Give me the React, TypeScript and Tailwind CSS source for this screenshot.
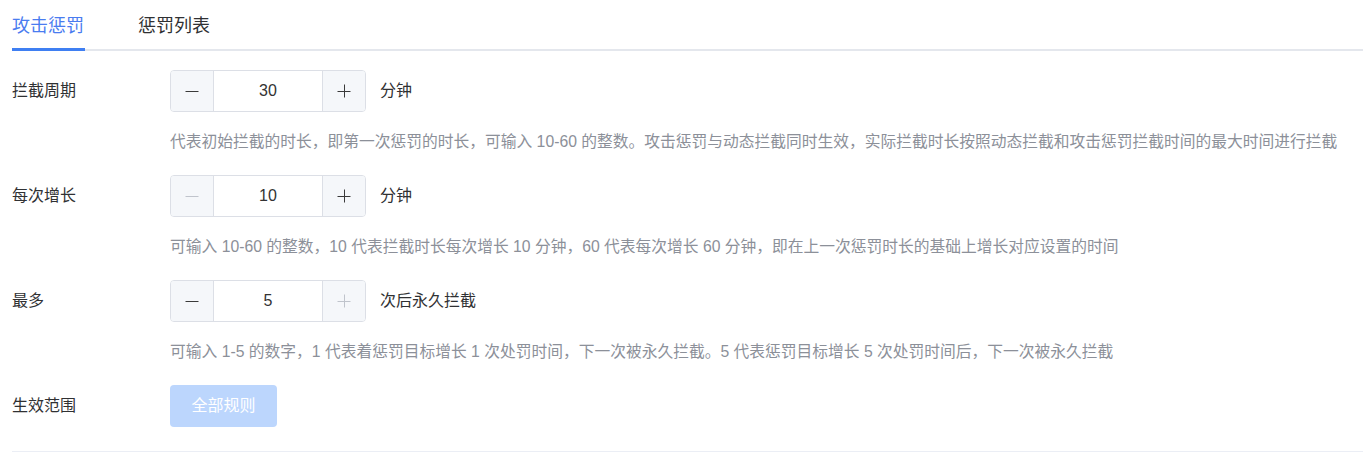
import React from 'react';

interface StepperProps {
  value: number;
  minDisabled?: boolean;
  maxDisabled?: boolean;
}

const Minus = ({ disabled }: { disabled?: boolean }) => (
  <svg width="14" height="14" viewBox="0 0 14 14">
    <line x1="0.5" y1="7.5" x2="13.5" y2="7.5" stroke={disabled ? '#c0c4cc' : '#3a3a3a'} strokeWidth="1" />
  </svg>
);

const Plus = ({ disabled }: { disabled?: boolean }) => (
  <svg width="14" height="14" viewBox="0 0 14 14">
    <line x1="0.5" y1="7.5" x2="13.5" y2="7.5" stroke={disabled ? '#c0c4cc' : '#3a3a3a'} strokeWidth="1" />
    <line x1="7.5" y1="0.5" x2="7.5" y2="13.5" stroke={disabled ? '#c0c4cc' : '#3a3a3a'} strokeWidth="1" />
  </svg>
);

const Stepper: React.FC<StepperProps> = ({ value, minDisabled, maxDisabled }) => (
  <div className="flex h-[42px] w-[196px] overflow-hidden rounded-[4px] border border-[#dcdfe6]">
    <div className="flex w-[43px] items-center justify-center border-r border-[#dcdfe6] bg-[#f5f7fa]">
      <Minus disabled={minDisabled} />
    </div>
    <div className="flex flex-1 items-center justify-center text-[16px] text-[#333]">{value}</div>
    <div className="flex w-[43px] items-center justify-center border-l border-[#dcdfe6] bg-[#f5f7fa]">
      <Plus disabled={maxDisabled} />
    </div>
  </div>
);

const rows = [
  {
    label: '拦截周期',
    value: 30,
    unit: '分钟',
    help: '代表初始拦截的时长，即第一次惩罚的时长，可输入 10-60 的整数。攻击惩罚与动态拦截同时生效，实际拦截时长按照动态拦截和攻击惩罚拦截时间的最大时间进行拦截',
  },
  {
    label: '每次增长',
    value: 10,
    unit: '分钟',
    minDisabled: true,
    help: '可输入 10-60 的整数，10 代表拦截时长每次增长 10 分钟，60 代表每次增长 60 分钟，即在上一次惩罚时长的基础上增长对应设置的时间',
  },
  {
    label: '最多',
    value: 5,
    unit: '次后永久拦截',
    maxDisabled: true,
    help: '可输入 1-5 的数字，1 代表着惩罚目标增长 1 次处罚时间，下一次被永久拦截。5 代表惩罚目标增长 5 次处罚时间后，下一次被永久拦截',
  },
];

export default function App() {
  return (
    <div className="min-h-[452px] w-full bg-white pl-[12px] font-['Liberation_Sans','Noto_Sans_CJK_SC',sans-serif] text-[#303133]">
      {/* tabs */}
      <div className="flex h-[51px] border-b-2 border-[#e4e7ed] pt-[4px]">
        <div className="relative flex items-center text-[18px] text-[#4a7cf0]">
          攻击惩罚
          <div className="absolute bottom-[-2px] left-0 right-[-1px] h-[3px] bg-[#3f7ff2]" />
        </div>
        <div className="ml-[54px] flex items-center text-[18px] text-[#303133]">惩罚列表</div>
      </div>

      {/* form */}
      <div className="mt-[19px]">
        {rows.map((row) => (
          <div key={row.label} className="mb-[22px] flex">
            <div className="w-[158px] shrink-0 text-[16px] leading-[42px]">{row.label}</div>
            <div>
              <div className="flex items-center">
                <Stepper value={row.value} minDisabled={row.minDisabled} maxDisabled={row.maxDisabled} />
                <span className="ml-[14px] text-[16px]">{row.unit}</span>
              </div>
              <p className="mt-[19px] whitespace-nowrap text-[15.75px] leading-[22px] text-[#8c9099]">{row.help}</p>
            </div>
          </div>
        ))}

        <div className="flex pb-[24px]">
          <div className="w-[158px] shrink-0 text-[16px] leading-[42px]">生效范围</div>
          <button
            disabled
            className="h-[42px] w-[107px] rounded-[4px] bg-[#bcd6fd] text-[16px] text-white"
          >
            全部规则
          </button>
        </div>
        <div className="h-px bg-[#ebeef5]" />
      </div>
    </div>
  );
}
